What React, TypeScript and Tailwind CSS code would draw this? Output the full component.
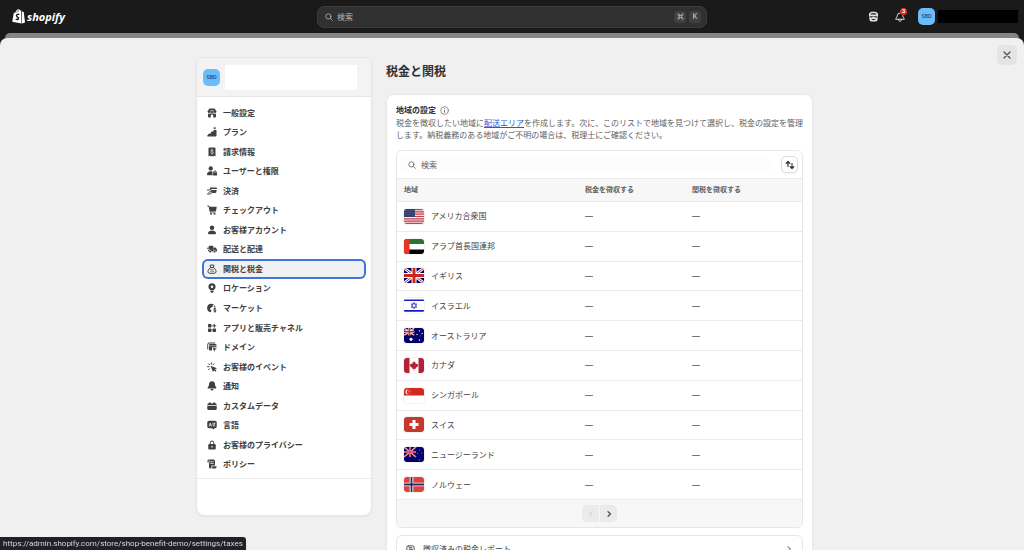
import React from "react";
import clsx from "clsx";

type IconProps = { className?: string; children?: React.ReactNode };

const Icon = ({ className, children }: IconProps) => (
   <svg
      viewBox="0 0 20 20"
      fill="currentColor"
      aria-hidden="true"
      className={clsx("shrink-0", className)}
   >
      {children}
   </svg>
);

const line = {
   fill: "none",
   stroke: "currentColor",
   strokeWidth: 2,
   strokeLinecap: "round",
   strokeLinejoin: "round",
} as const;

const cut = {
   fill: "none",
   stroke: "#fff",
   strokeWidth: 1.4,
   strokeLinecap: "round",
   strokeLinejoin: "round",
} as const;

const navItems: { label: string; icon: React.ReactNode }[] = [
   {
      label: "一般設定",
      icon: (
         <>
            <path d="M5 1h10l4 5.5c0 3.8-4.300 4.500-6 2.200-1.200 2.200-4.800 2.200-6 0C5.300 11 1 10.300 1 6.500z" />
            <path d="M2 11.300c2 .3 3.800 0 5-1 1.700 1.200 4.300 1.200 6 0 1.200 1 3 1.300 5 1V17a2 2 0 0 1-2 2h-3.500v-3.500a2.500 2.500 0 0 0-5 0V19H4a2 2 0 0 1-2-2z" />
            <path {...cut} d="M7 5.500h6" />
         </>
      ),
   },
   {
      label: "プラン",
      icon: (
         <>
            <path d="M19 7v10a2 2 0 0 1-2 2H2c-1.500 0-2-1.500-1-2.500L4 13h3.500l1-4h4l1-3H18a1 1 0 0 1 1 1z" />
            <path {...line} strokeWidth={1.6} d="M15.500 0.500v3.500M13.700 2.300h3.600" />
         </>
      ),
   },
   {
      label: "請求情報",
      icon: (
         <>
            <path d="M3 3a2 2 0 0 1 2-2h10a2 2 0 0 1 2 2v16l-2.500-1.500L12 19l-2-1.500L8 19l-2.500-1.500L3 19z" />
            <path {...cut} d="M12.500 7c-.5-1-4.800-1.500-4.800.8 0 2.400 4.800 1 4.800 3.400 0 2.300-4.500 2-5 .6M10 4.200v1.300M10 13v1.300" />
         </>
      ),
   },
   {
      label: "ユーザーと権限",
      icon: (
         <>
            <circle cx="7.500" cy="5" r="4.300" />
            <path d="M0 16.500c0-4 3.500-6 7.500-6 1.400 0 2.500.3 3.500.8V18.500H1.500A1.500 1.500 0 0 1 0 17z" />
            <path d="M12 13h8v5a1 1 0 0 1-1 1h-6a1 1 0 0 1-1-1z" />
            <path {...line} d="M14 13v-1.500a2 2 0 0 1 4 0V13" />
         </>
      ),
   },
   {
      label: "決済",
      icon: (
         <>
            <path d="M7 3h11a2 2 0 0 1 2 2v1H5.200zM8 8h11.500l-1 4.500a2 2 0 0 1-2 1.500H9.500l3-3H7z" />
            <path {...line} d="M1 8h4l3-1M1 16h6l4.500-4.500H6L3.500 13" />
         </>
      ),
   },
   {
      label: "チェックアウト",
      icon: (
         <>
            <path {...line} d="M1.500 2H4l2.500 12H16" />
            <path d="M4.500 3.500H19.500l-1.500 9H6.500z" />
            <circle cx="8" cy="17.500" r="2" />
            <circle cx="15" cy="17.500" r="2" />
         </>
      ),
   },
   {
      label: "お客様アカウント",
      icon: (
         <>
            <circle cx="10" cy="5.500" r="4.500" />
            <path d="M2 16.500C2 12.500 6 11 10 11s8 1.500 8 5.500a2 2 0 0 1-2 2H4a2 2 0 0 1-2-2z" />
         </>
      ),
   },
   {
      label: "配送と配達",
      icon: (
         <>
            <path d="M4 3.500h8.500V15H4a2 2 0 0 1-2-2v-1.500h3v-2H0v-2h3zM13 7h4l3 4v4h-7z" />
            <circle cx="6.500" cy="15" r="2.500" stroke="#fff" />
            <circle cx="15" cy="15" r="2.500" stroke="#fff" />
         </>
      ),
   },
   {
      label: "関税と税金",
      icon: (
         <>
            <path {...line} d="M7.500 6.500 6 2.500c1.500-1 2.500.5 4-.5 1.500 1 2.500-.5 4 .5l-1.500 4zM7.500 6.500C4 9 2 12 2 15a3.500 3.500 0 0 0 3.500 3.500h9A3.500 3.500 0 0 0 18 15c0-3-2-6-5.500-8.500" />
            <path {...line} strokeWidth={1.5} d="m12.500 10.500-5 5" />
            <circle cx="7.700" cy="11" r="1.300" />
            <circle cx="12.300" cy="15" r="1.300" />
         </>
      ),
   },
   {
      label: "ロケーション",
      icon: (
         <>
            <path
               fillRule="evenodd"
               d="M10 .5a7.200 7.200 0 0 0-7.200 7.200c0 3.800 3 5.300 4.500 7.300h5.400c1.500-2 4.500-3.500 4.500-7.300A7.200 7.200 0 0 0 10 .5zm0 4.700a2.500 2.500 0 1 1 0 5 2.500 2.500 0 0 1 0-5z"
            />
            <path d="M6.500 16h7L12 19.500H8z" />
         </>
      ),
   },
   {
      label: "マーケット",
      icon: (
         <>
            <path d="M9 1.500a8.500 8.500 0 0 0-1.500 16.900L9 15l-3.500-3L8 9l3-1 .5-3.500L14 3a8.500 8.500 0 0 0-5-1.500zM14.500 4.500 13 7l4.300 1a8 8 0 0 0-2.800-3.500z" />
            <path {...line} d="M17.500 11.500c-1-1-4-1-4 .8 0 2 4.500 1.200 4.500 3.400 0 1.800-3.500 2-4.500.8M15.700 9.500v9" />
         </>
      ),
   },
   {
      label: "アプリと販売チャネル",
      icon: (
         <>
            <rect x="2" y="2" width="7" height="7" rx="1.5" />
            <rect x="2" y="11" width="7" height="7" rx="1.5" />
            <rect x="11" y="11" width="7" height="7" rx="1.5" />
            <path {...line} strokeWidth={2.2} d="M14.500 2.500v6M11.500 5.500h6" />
         </>
      ),
   },
   {
      label: "ドメイン",
      icon: (
         <>
            <path {...line} d="M1.500 14V4.500A2.500 2.500 0 0 1 4 2h11.500" />
            <path d="M4 6a2 2 0 0 1 2-2h11a2 2 0 0 1 2 2v4.500h-9V17H6a2 2 0 0 1-2-2z" />
            <path {...cut} strokeWidth={1} d="M4 7.500h15" />
            <path d="m11 11 9 2.500-3.500 1.700-1.800 3.800z" />
         </>
      ),
   },
   {
      label: "お客様のイベント",
      icon: (
         <>
            <path d="m7 7.500 13 4.800-4 2 3 3-2 2-3-3-2 4z" />
            <path {...line} d="M8.500 1.500v3M3 3.500l2 2M1 9.500h3M3 15.500l2-2M14 3.500l-2 2" />
         </>
      ),
   },
   {
      label: "通知",
      icon: (
         <>
            <path d="M10 .5a6 6 0 0 0-6 6c0 3-1 4-2.200 5.500-1.200 1.500-.4 3.200 1.200 3.200h14c1.600 0 2.400-1.700 1.200-3.200C17 10.500 16 9.500 16 6.500a6 6 0 0 0-6-6z" />
            <path d="M7 16.200h6a3 3 0 0 1-6 0z" />
         </>
      ),
   },
   {
      label: "カスタムデータ",
      icon: (
         <path d="M3 5a2 2 0 0 1 2-2h1.500a2 2 0 0 1 2 2h3a2 2 0 0 1 2-2H15a2 2 0 0 1 2 2c1.500.3 2.500 1.500 2.500 3.500H.5C.5 6.500 1.500 5.300 3 5zM.5 9.800h19V15a3 3 0 0 1-3 3h-13a3 3 0 0 1-3-3z" />
      ),
   },
   {
      label: "言語",
      icon: (
         <>
            <path d="M4 1.500h12a3.500 3.500 0 0 1 3.500 3.500v8a3.500 3.500 0 0 1-3.500 3.500h-1l-2 2.500-3-2.500H4A3.500 3.500 0 0 1 .5 13V5A3.500 3.500 0 0 1 4 1.500z" />
            <path {...cut} d="m4.500 12 2.200-6 2.200 6M5.500 10h2.500M12 6.500h4M12.500 12c2-1 2.500-3 2.500-5M12 9c.5 1.500 2 2.700 3.500 3" />
         </>
      ),
   },
   {
      label: "お客様のプライバシー",
      icon: (
         <>
            <path {...line} d="M6.500 8V5.500a3.500 3.500 0 0 1 7 0V8" />
            <rect x="2.500" y="8" width="15" height="11" rx="2.500" />
            <path {...cut} strokeWidth={2} d="M10 12.500v2" />
         </>
      ),
   },
   {
      label: "ポリシー",
      icon: (
         <>
            <path d="M3.500 1H13a3 3 0 0 1 3 3v9H9v3.500a2.500 2.500 0 0 1-5 0V7H1V3.500A2.500 2.500 0 0 1 3.500 1z" />
            <path d="M10.500 14.500H19V16a3 3 0 0 1-3 3H9.500a4 4 0 0 0 1-2.500z" />
            <path {...cut} d="M4.200 7V3.500M7.500 5.500h5M7.500 9h5" />
         </>
      ),
   },
];

const star =
   "m0-1 .24.5.54-.12-.25.5.45.35-.55.1.02.57L0 .55l-.45.35.02-.57-.55-.1.45-.35-.25-.5.54.12z";

const UnionJack = () => (
   <>
      <rect width="20" height="15" fill="#010169" />
      <path d="m0 0 20 15M20 0 0 15" stroke="#fff" strokeWidth="3" />
      <path d="m0 0 20 15M20 0 0 15" stroke="#c8202f" strokeWidth="1" />
      <path d="M10 0v15M0 7.500h20" stroke="#fff" strokeWidth="5" />
      <path d="M10 0v15M0 7.500h20" stroke="#c5281c" strokeWidth="3" />
   </>
);

const countries: { name: string; flag: React.ReactNode }[] = [
   {
      name: "アメリカ合衆国",
      flag: (
         <>
            <rect width="20" height="15" fill="#f4e4e6" />
            <path
               d="M0 .6h20M0 2.900h20M0 5.200h20M0 7.500h20M0 9.800h20M0 12.100h20M0 14.400h20"
               stroke="#c4414f"
               strokeWidth="1.2"
            />
            <rect width="11" height="8" fill="#33406f" />
            <path
               d="M1 1.500h10M1 3.500h10M1 5.500h10"
               stroke="#8d95b5"
               strokeWidth=".5"
               strokeDasharray=".6 1.2"
            />
         </>
      ),
   },
   {
      name: "アラブ首長国連邦",
      flag: (
         <>
            <rect width="20" height="15" fill="#fff" />
            <rect width="20" height="5" fill="#2f7033" />
            <rect y="10.5" width="20" height="4.5" fill="#000" />
            <rect width="5.500" height="15" fill="#eb3323" />
         </>
      ),
   },
   { name: "イギリス", flag: <UnionJack /> },
   {
      name: "イスラエル",
      flag: (
         <>
            <rect width="20" height="15" fill="#fff" />
            <path d="M0 2.300h20M0 12.900h20" stroke="#1a1ac4" strokeWidth="1.6" />
            <path
               d="M10 4.300 12.800 9.300H7.200zM10 10.900 7.200 5.900h5.600z"
               fill="none"
               stroke="#2a2ad0"
               strokeWidth=".7"
            />
         </>
      ),
   },
   {
      name: "オーストラリア",
      flag: (
         <>
            <rect width="20" height="15" fill="#010169" />
            <svg width="10.5" height="7.5" viewBox="0 0 20 15" preserveAspectRatio="none">
               <UnionJack />
            </svg>
            <g fill="#fff">
               <path transform="translate(7 11.300) scale(2.100)" d={star} />
               <path transform="translate(15.500 3) scale(.9)" d={star} />
               <path transform="translate(13 6.500) scale(.9)" d={star} />
               <path transform="translate(18 5.500) scale(.9)" d={star} />
               <path transform="translate(15.500 12) scale(1)" d={star} />
               <path transform="translate(16.500 8) scale(.5)" d={star} />
            </g>
         </>
      ),
   },
   {
      name: "カナダ",
      flag: (
         <>
            <rect width="20" height="15" fill="#fff" />
            <path d="M0 0h5.500v15H0zM14.500 0H20v15h-5.500z" fill="#b22234" />
            <path
               d="M10 3l1 1.800.9-.4-.3 2.100 1.200-1 .3.700 1.200-.1-.6 1.500.6.500-2.700 2 .2.800-1.500-.2v1.800h-.6v-1.800l-1.500.2.200-.8-2.700-2 .6-.5-.6-1.500 1.200.1.300-.7 1.200 1-.3-2.100.9.400z"
               fill="#b22234"
            />
         </>
      ),
   },
   {
      name: "シンガポール",
      flag: (
         <>
            <rect width="20" height="15" fill="#fff" />
            <rect width="20" height="7.5" fill="#d02a1e" />
            <circle cx="3.800" cy="4" r="2.400" fill="#fff" />
            <circle cx="4.800" cy="4" r="2.200" fill="#d02a1e" />
            <g fill="#fff">
               <circle cx="5.500" cy="2.800" r=".35" />
               <circle cx="4.500" cy="3.700" r=".35" />
               <circle cx="6.500" cy="3.700" r=".35" />
               <circle cx="4.900" cy="5" r=".35" />
               <circle cx="6.100" cy="5" r=".35" />
            </g>
         </>
      ),
   },
   {
      name: "スイス",
      flag: (
         <>
            <rect width="20" height="15" fill="#c5382b" />
            <path d="M10 3v9M5.500 7.500h9" stroke="#fff" strokeWidth="3" />
         </>
      ),
   },
   {
      name: "ニュージーランド",
      flag: (
         <>
            <rect width="20" height="15" fill="#010169" />
            <path
               d="m0 0 12 10M12 0 0 10M6 0v10M0 5h12"
               stroke="#f3b9c0"
               strokeWidth="1.6"
            />
            <path d="m0 0 12 10M12 0 0 10" stroke="#d8404e" strokeWidth=".6" />
            <path d="M6 0v10M0 5h12" stroke="#d8303e" strokeWidth="1" />
            <g fill="#b9566f">
               <path transform="translate(15.500 3) scale(.9)" d={star} />
               <path transform="translate(13.500 6.500) scale(.9)" d={star} />
               <path transform="translate(17.800 6) scale(.9)" d={star} />
               <path transform="translate(15.500 13) scale(1)" d={star} />
            </g>
         </>
      ),
   },
   {
      name: "ノルウェー",
      flag: (
         <>
            <rect width="20" height="15" fill="#e0413a" />
            <path d="M7.500 0v15M0 7.500h20" stroke="#fff" strokeWidth="3.6" />
            <path d="M7.500 0v15M0 7.500h20" stroke="#1f2f6b" strokeWidth="1.8" />
         </>
      ),
   },
];

const SearchIcon = ({ className }: { className?: string }) => (
   <Icon className={className}>
      <circle {...line} cx="8.500" cy="8.500" r="6.500" />
      <path {...line} d="m13.500 13.500 5 5" />
   </Icon>
);

const Avatar = () => (
   <span className="flex size-[17px] shrink-0 items-center justify-center rounded-[5px] bg-[#6cbcfb] font-['Inter',sans-serif] text-[5px] leading-none font-semibold text-[#1d4a73]">
      SBD
   </span>
);

function TopBar() {
   return (
      <header className="grid h-[33px] grid-cols-[1fr_390px_1fr] items-center px-1.5">
         <a href="#" className="flex items-center gap-0.5 pl-1.5 text-white">
            <svg viewBox="0 0 26 30" className="h-[15px] w-[13px]" aria-hidden="true">
               <path
                  fill="#fff"
                  d="M3.500 8.200 7 7c.7-3.500 3-6.200 6-6.400 1.500 0 2.500 1 3 2.300l2-.4 1 26.500L.5 25.500z"
               />
               <path fill="#fff" d="m19.500 3.500 1.800 2 2.200.3L26 27l-6 2z" />
               <path
                  d="M9 7c.8-2.500 2.500-4.200 4-4.300M12.500 5.500c.8-1.300.9-2 .5-2.800"
                  stroke="#1a1a1a"
                  fill="none"
               />
               <path
                  d="M14.500 11c-2.500-1.300-5.500-.3-5.500 2.200 0 3 4.300 3 4 6-.2 2.200-3 2.500-5.500.8"
                  fill="none"
                  stroke="#1a1a1a"
                  strokeWidth="2.8"
               />
            </svg>
            <span className="font-['Open_Sans',sans-serif] text-[11px] leading-4 font-bold italic">
               shopify
            </span>
         </a>
         <label className="flex h-[22px] items-center rounded-[7px] border border-[#3b3b3b] bg-[#303030] pr-[5px] pl-[7px] text-[#b5b5b5]">
            <SearchIcon className="size-2" />
            <input
               type="text"
               aria-label="検索"
               placeholder="検索"
               className="ml-1 min-w-0 flex-1 bg-transparent text-[8px] leading-3 outline-none placeholder:text-[#b5b5b5]"
            />
            <kbd className="mr-[3px] flex size-3 items-center justify-center rounded-[3px] bg-[#3f3f3f]">
               <Icon className="size-[7px]">
                  <path
                     {...line}
                     strokeWidth={2.2}
                     d="M7 7h6v6H7zM7 7V4.500A2.500 2.500 0 1 0 4.500 7zM13 7V4.500A2.500 2.500 0 1 1 15.500 7zM7 13v2.500A2.500 2.500 0 1 1 4.500 13zM13 13v2.500a2.500 2.500 0 1 0 2.500-2.500z"
                  />
               </Icon>
            </kbd>
            <kbd className="flex size-3 items-center justify-center rounded-[3px] bg-[#3f3f3f] font-['Inter',sans-serif] text-[7px] leading-none font-semibold">
               K
            </kbd>
         </label>
         <div className="flex items-center justify-end text-[#e3e3e3]">
            <button type="button" aria-label="Sidekick" className="mr-4">
               <Icon className="size-[11px]">
                  <path
                     fillRule="evenodd"
                     d="M6 1.500h8l4 2.500.5 4-1 1.500V15a4 4 0 0 1-4 4h-7a4 4 0 0 1-4-4V9.500l-1-1.500L2 4zM4 6.500h12L13.500 4h-7zM4 9.500V12h3.500l1-1.500h3l1 1.500H16V9.500zM6 14.500c1.500 2.300 6.500 2.300 8 0z"
                  />
               </Icon>
            </button>
            <button type="button" aria-label="通知 3" className="relative mr-[13px]">
               <Icon className="size-[10px]">
                  <path
                     {...line}
                     d="M10 2a5.500 5.500 0 0 0-5.500 5.500c0 3-3 4.500-3 7h17c0-2.500-3-4-3-7M7 15c0 5 6 5 6 0"
                  />
               </Icon>
               <span className="absolute -top-1 left-[5px] flex size-[7px] items-center justify-center rounded-full bg-[#dc3030] text-[5px] leading-none font-bold text-white">
                  3
               </span>
            </button>
            <Avatar />
            <span className="ml-[3px] h-[13px] w-20 bg-black" />
         </div>
      </header>
   );
}

function Sidebar() {
   return (
      <nav className="w-[176px] shrink-0 overflow-hidden rounded-lg border border-[#e6e6e6] bg-white shadow-xs">
         <div className="flex h-[39px] items-center gap-[5px] border-b border-[#e6e6e6] bg-[#f3f3f3] pr-3.5 pl-1.5">
            <Avatar />
            <span className="h-[25px] flex-1 bg-white" />
         </div>
         <ul className="grid h-[382px] auto-rows-fr border-b border-[#ebebeb] px-[5px] pt-[6px] pb-1">
            {navItems.map((item) => {
               const active = item.label === "関税と税金";
               return (
                  <li key={item.label} className="flex">
                     <a
                        href="#"
                        aria-current={active ? "page" : undefined}
                        className={clsx(
                           "flex flex-1 items-center gap-1.5 rounded-[6px] px-[5px] text-[8px] leading-3 font-bold text-[#404040]",
                           active && "bg-[#f1f1f1] ring-2 ring-[#3f74dc] ring-inset"
                        )}
                     >
                        <Icon className="size-[10px]">{item.icon}</Icon>
                        {item.label}
                     </a>
                  </li>
               );
            })}
         </ul>
         <div className="h-9" />
      </nav>
   );
}

function RegionTable() {
   return (
      <div className="mt-[9px] overflow-hidden rounded-md border border-[#e6e6e6]">
         <div className="flex h-[27px] items-center gap-[11px] pr-1 pl-1">
            <label className="flex h-[17px] flex-1 items-center gap-[5px] rounded-[5px] bg-[#fdfdfd] pl-[7px] text-[#616161]">
               <SearchIcon className="size-2" />
               <input
                  type="text"
                  aria-label="地域を検索"
                  placeholder="検索"
                  className="min-w-0 flex-1 bg-transparent text-[8px] leading-3 outline-none placeholder:text-[#616161]"
               />
            </label>
            <button
               type="button"
               aria-label="並べ替え"
               className="flex size-[17px] items-center justify-center rounded-[5px] border border-[#dcdcdc] bg-white text-[#303030] shadow-xs"
            >
               <Icon className="size-[10px]">
                  <path
                     {...line}
                     strokeWidth={2.4}
                     d="M6 13V3M2.500 6.500 6 3l3.500 3.500M14 7v10M10.500 13.500 14 17l3.500-3.500"
                  />
               </Icon>
            </button>
         </div>
         <table className="h-[322px] w-full table-fixed border-collapse text-left text-[8px] leading-3 text-[#404040]">
            <thead>
               <tr className="h-[23px] border-y border-[#ebebeb] bg-[#f7f7f7] text-[7px] text-[#616161]">
                  <th className="w-[185px] pl-[7px] font-bold">地域</th>
                  <th className="w-[107px] pl-[3px] font-bold">税金を徴収する</th>
                  <th className="pl-[3px] font-bold">関税を徴収する</th>
               </tr>
            </thead>
            <tbody>
               {countries.map((country) => (
                  <tr key={country.name} className="border-b border-[#ebebeb]">
                     <td className="pl-[7px]">
                        <div className="flex items-center gap-[7px]">
                           <svg
                              viewBox="0 0 20 15"
                              aria-hidden="true"
                              className="h-[15px] w-5 rounded-[3px] ring-1 ring-black/5"
                           >
                              {country.flag}
                           </svg>
                           {country.name}
                        </div>
                     </td>
                     <td className="pl-[3px]">—</td>
                     <td className="pl-[3px]">—</td>
                  </tr>
               ))}
            </tbody>
         </table>
         <div className="flex h-[27px] items-center justify-center gap-px bg-[#f7f7f7]">
            <button
               type="button"
               disabled
               aria-label="前へ"
               className="flex size-[17px] items-center justify-center rounded-l-[5px] bg-[#ebebeb] text-[#c4c4c4]"
            >
               <Icon className="size-2">
                  <path {...line} strokeWidth={2.4} d="m12.500 4-6 6 6 6" />
               </Icon>
            </button>
            <button
               type="button"
               aria-label="次へ"
               className="flex size-[17px] items-center justify-center rounded-r-[5px] bg-[#ebebeb] text-[#404040]"
            >
               <Icon className="size-2">
                  <path {...line} strokeWidth={3} d="m7.500 4 6 6-6 6" />
               </Icon>
            </button>
         </div>
      </div>
   );
}

function TaxSettings() {
   return (
      <main className="min-w-0 flex-1">
         <h1 className="mt-[7px] text-[12px] leading-4 font-bold text-[#303030]">
            税金と関税
         </h1>
         <section className="mt-[14px] rounded-lg border border-[#e8e8e8] bg-white px-[9px] pt-[9px] pb-3 shadow-xs">
            <h2 className="flex items-center gap-1 text-[8px] leading-3 font-bold text-[#303030]">
               地域の設定
               <Icon className="size-[9px] text-[#616161]">
                  <circle {...line} strokeWidth={1.5} cx="10" cy="10" r="8.500" />
                  <path {...line} d="M10 9.500v4.500M10 6v.2" />
               </Icon>
            </h2>
            <p className="mt-px text-[8px] leading-3 text-[#616161]">
               税金を徴収したい地域に
               <a href="#" className="text-[#1d5bd8] underline">
                  配送エリア
               </a>
               を作成します。次に、このリストで地域を見つけて選択し、税金の設定を管理します。納税義務のある地域がご不明の場合は、税理士にご確認ください。
            </p>
            <RegionTable />
            <a
               href="#"
               className="mt-[7px] flex h-7 items-center gap-2 rounded-md border border-[#e6e6e6] px-[9px] text-[8px] leading-3 text-[#404040]"
            >
               <Icon className="size-[9px]">
                  <path
                     {...line}
                     d="M5 2h10a3 3 0 0 1 3 3v8a3 3 0 0 1-3 3h-2l-3 2.500L7 16H5a3 3 0 0 1-3-3V5a3 3 0 0 1 3-3zM7 6h6M7 9.500h3"
                  />
                  <circle {...line} cx="12" cy="11" r="2" />
               </Icon>
               <span className="flex-1">徴収済みの税金レポート</span>
               <Icon className="size-2">
                  <path {...line} strokeWidth={2.4} d="m7.500 4 6 6-6 6" />
               </Icon>
            </a>
         </section>
      </main>
   );
}

export default function App() {
   return (
      <div className="flex h-screen flex-col overflow-hidden bg-[#1a1a1a] font-['Inter','Noto_Sans_CJK_JP',sans-serif]">
         <TopBar />
         <div className="mx-[5px] h-[5px] shrink-0 rounded-t-[6px] bg-[#868484]" />
         <div className="relative flex-1 overflow-hidden rounded-t-[7px] bg-[#f0f0f0] pt-[19px] pr-[15px]">
            <button
               type="button"
               aria-label="閉じる"
               className="absolute top-[7px] right-[7px] flex size-5 items-center justify-center rounded-[5px] bg-[#e4e4e4] text-[#4a4a4a]"
            >
               <Icon className="size-[10px]">
                  <path {...line} strokeWidth={2.4} d="m4 4 12 12M16 4 4 16" />
               </Icon>
            </button>
            <div className="mx-auto flex max-w-[617px] items-start gap-[14px]">
               <Sidebar />
               <TaxSettings />
            </div>
         </div>
         <div className="fixed bottom-0 left-0 h-[13px] rounded-tr-[3px] bg-[#1f2129] px-[3px] font-['Roboto',sans-serif] text-[8px] leading-[13px] text-[#d5d7dc] shadow-md">
            https://admin.shopify.com/store/shop-benefit-demo/settings/taxes
         </div>
      </div>
   );
}
